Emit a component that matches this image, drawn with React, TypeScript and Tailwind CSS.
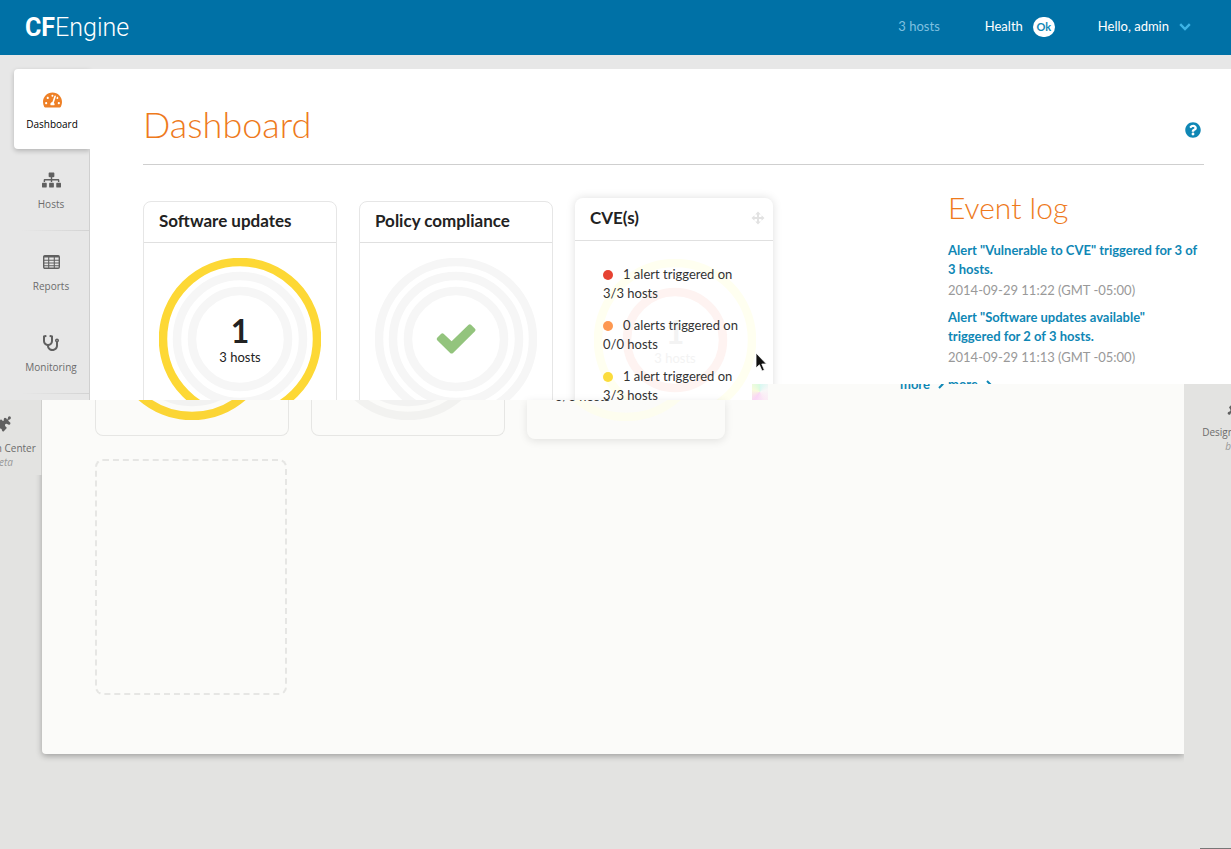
import React from "react";
import { FaQuestionCircle, FaSitemap, FaStethoscope, FaTachometerAlt } from "react-icons/fa";

const GREY = "#f6f6f6";

function Rings({ colors, className }: { colors: string[]; className?: string }) {
  const radii = [77, 63, 48];
  return (
    <svg viewBox="0 0 162 162" className={className} aria-hidden="true">
      {radii.map((r, i) => (
        <circle key={r} cx="81" cy="81" r={r} fill="none" stroke={colors[i]} strokeWidth="8.5" />
      ))}
    </svg>
  );
}

function TableIcon() {
  return (
    <svg viewBox="0 0 17 14" className="h-[14px] w-[17px]" fill="none" stroke="currentColor" aria-hidden="true">
      <rect x="0.7" y="0.7" width="15.6" height="12.6" rx="1.2" strokeWidth="1.4" />
      <path d="M1 1.6H16" strokeWidth="1.8" />
      <path d="M1 5.2H16M1 8H16M1 10.8H16M5.7 1V13M11.3 1V13" strokeWidth="1.1" />
    </svg>
  );
}

function PuzzleIcon() {
  return (
    <svg viewBox="0 0 18 18" className="size-[18px]" fill="currentColor" aria-hidden="true">
      <path d="M3 8.2L7 4.2L8.6 5.8Q9.6 6.2 9.8 5.2Q9.4 3.2 11 2.8Q12.6 2.8 13 4.4Q13.6 4.6 13.8 3.4Q13.8 1.2 15.6 1.2Q17.2 1.6 16.8 3.4Q16.2 4.8 14.6 4.8Q14 5.6 14.8 6.2L16.4 7.8Q16.6 9.2 15.4 9.8Q14.2 10 13.2 9Q11.6 8.4 11 9.8Q10.8 11.2 12.2 12L12.8 13L9.6 16.4Q8.4 16.8 8 15.4Q8 13.6 6.4 13.4Q4.8 13.6 4.4 15.2Q3 16.4 1.8 15Q1.2 13.4 3 12.8Q4.8 12.4 4.4 10.8Z" />
    </svg>
  );
}

function MoveIcon() {
  return (
    <svg viewBox="0 0 14 14" className="size-[14px] text-[#e2e2e2]" fill="currentColor" aria-hidden="true">
      <path d="M7 .5L9.8 3.5H8V6H10.5V4.2L13.5 7L10.5 9.8V8H8V10.5H9.8L7 13.5L4.2 10.5H6V8H3.5V9.8L.5 7L3.5 4.2V6H6V3.5H4.2Z" />
    </svg>
  );
}

function NavItem({ label, icon, active, note }: { label: string; icon: React.ReactNode; active?: boolean; note?: string }) {
  return (
    <a
      href="#"
      className={
        active
          ? "flex h-20 w-[76px] flex-col items-center rounded-l bg-white pt-[21px] font-['Open_Sans',sans-serif] text-[10px] leading-4 text-black shadow-[0_2px_5px_rgba(0,0,0,0.22)]"
          : "flex h-[81px] w-[74px] flex-col items-center pt-[21px] font-['Open_Sans',sans-serif] text-[10px] leading-4 text-[#6c6c6c]"
      }
    >
      <span className={active ? "flex h-5 items-center text-[#ee8026]" : "flex h-5 items-center text-[#606060]"}>{icon}</span>
      <span className="mt-[6px] whitespace-nowrap">{label}</span>
      {note && <i className="leading-3 text-[#999]">{note}</i>}
    </a>
  );
}

function Separator() {
  return <div className="ml-2 h-px w-[67px] bg-linear-to-r from-transparent to-[#d3d3d3]" />;
}

function Card({ title, children }: { title: string; children: React.ReactNode }) {
  return (
    <section className="mt-1 h-60 w-[194px] shrink-0 rounded-lg border border-[#e6e6e6] bg-white">
      <h2 className="h-[41px] border-b border-[#e0e0e0] pl-[15px] text-[17px] leading-[38px] font-bold text-[#222]">{title}</h2>
      <div className="relative mx-auto mt-[15px] h-[162px] w-[162px]">{children}</div>
    </section>
  );
}

function Alert({ dot, count }: { dot: string; count: [string, string] }) {
  return (
    <li>
      <span className={"mr-[10px] inline-block size-[10px] rounded-full align-[-1px] " + dot} />
      {count[0]} triggered on
      <br />
      {count[1]} hosts
    </li>
  );
}

function EventItem({ text, time }: { text: string; time: string }) {
  return (
    <li>
      <a href="#" className="block font-bold text-[#0f87b5]">
        {text}
      </a>
      <time className="block pt-[2px] text-[#999]">{time}</time>
    </li>
  );
}

function More() {
  return (
    <a href="#" className="flex items-center gap-2 text-[13px] leading-4 font-bold text-[#0f87b5]">
      more
      <svg viewBox="0 0 6 9" className="mt-px h-[9px] w-[6px]" fill="none" stroke="currentColor" strokeWidth="2" aria-hidden="true">
        <path d="M1 1L4.5 4.5L1 8" />
      </svg>
    </a>
  );
}

export default function App() {
  return (
    <div className="flex min-h-screen flex-col bg-[#e3e3e1] font-['Lato',sans-serif] text-[13px] text-[#333]">
      <header className="flex h-[55px] items-center bg-[#0071a6] pr-10 pb-px pl-[25px] text-white">
        <a href="#" className="pt-[2px] font-['Roboto',sans-serif] text-[25px] leading-8 font-light">
          <b className="font-bold">CF</b>Engine
        </a>
        <div className="ml-auto flex items-center">
          <span className="mr-[45px] text-[#7fc0e0]">3 hosts</span>
          <span className="mr-[10px]">Health</span>
          <span className="mr-[43px] flex h-5 w-[22px] items-center justify-center rounded-full bg-white text-[11px] font-bold text-[#0f87b5]">Ok</span>
          <button className="flex items-center gap-[10px]">
            Hello, admin
            <svg viewBox="0 0 12 8" className="h-2 w-3" fill="none" stroke="#3db4e6" strokeWidth="2.4" aria-hidden="true">
              <path d="M1.2 1.2L6 6L10.8 1.2" />
            </svg>
          </button>
        </div>
      </header>

      <div className="relative h-[345px] overflow-hidden bg-[#e7e7e7] pt-[14px] pl-[14px]">
        <div className="flex">
          <nav className="relative flex w-[76px] shrink-0 flex-col">
            <NavItem active label="Dashboard" icon={<FaTachometerAlt className="h-[18px] w-[19px]" />} />
            <div className="border-r border-[#d0d0d0]">
              <NavItem label="Hosts" icon={<FaSitemap className="h-4 w-[19px]" />} />
              <Separator />
              <NavItem label="Reports" icon={<TableIcon />} />
              <NavItem label="Monitoring" icon={<FaStethoscope className="size-4" />} />
              <Separator />
              <div className="h-10" />
            </div>
          </nav>

          <main className="relative h-[345px] min-w-0 flex-1 bg-white pt-[35px] pr-[27px] pl-[53px]">
            <div className="flex items-center justify-between border-b border-[#cfcfcf] pb-5">
              <h1 className="text-[36px] leading-10 font-light text-[#ee7a1c]">Dashboard</h1>
              <button aria-label="Help" className="mt-3 mr-[3px]">
                <FaQuestionCircle className="size-4 text-[#0f87b5]" />
              </button>
            </div>

            <div className="flex">
              <div className="flex flex-1 items-start gap-[22px] pt-8">
                <Card title="Software updates">
                  <Rings colors={["#fdd835", GREY, GREY]} className="size-full" />
                  <div className="absolute inset-0 flex flex-col items-center pt-[57px] text-[#222]">
                    <b className="text-[32px] leading-8">1</b>
                    <span className="mt-[2px] leading-4">3 hosts</span>
                  </div>
                </Card>
                <Card title="Policy compliance">
                  <Rings colors={[GREY, GREY, GREY]} className="size-full" />
                  <svg viewBox="0 0 40 30" className="absolute inset-0 m-auto h-[30px] w-10" aria-label="Compliant">
                    <path
                      d="M1.2 13.7L5.2 9.7Q6.4 8.7 7.6 9.7L15.6 17.3L32.6 .8Q33.8 -.2 35 .8L39 4.8Q40 6 39 7.2L16.8 29.2Q15.6 30 14.4 29.2L1.2 16.2Q.2 15 1.2 13.7Z"
                      fill="#93c47d"
                    />
                  </svg>
                </Card>
                <section className="relative mt-px h-60 w-[198px] shrink-0 rounded-lg bg-white shadow-[0_0_10px_rgba(0,0,0,0.13)]">
                  <div className="flex h-[43px] items-center justify-between border-b border-[#e0e0e0] pr-2 pb-[2px] pl-[15px]">
                    <h2 className="text-[17px] font-bold text-[#222]">CVE(s)</h2>
                    <MoveIcon />
                  </div>
                  <div className="absolute top-[61px] left-[19px] size-[162px]">
                    <Rings colors={["#fffff0", "#ffffff", "#fef3f1"]} className="size-full" />
                    <div className="absolute inset-0 flex flex-col items-center pt-[57px] text-[#f3f3f3]">
                      <b className="text-[32px] leading-8">1</b>
                      <span className="mt-[2px] leading-4">3 hosts</span>
                    </div>
                  </div>
                  <ul className="relative flex flex-col gap-[13px] pt-6 pl-7 leading-[19px] whitespace-nowrap">
                    <Alert dot="bg-[#e64232]" count={["1 alert", "3/3"]} />
                    <Alert dot="bg-[#fd9850]" count={["0 alerts", "0/0"]} />
                    <Alert dot="bg-[#fbdc3c]" count={["1 alert", "3/3"]} />
                  </ul>
                </section>
              </div>

              <aside className="w-64 shrink-0 pt-[26px]">
                <h2 className="text-[30px] leading-8 font-light text-[#ee7a1c]">Event log</h2>
                <ul className="flex flex-col gap-2 pt-[18px] pr-1 leading-[19px]">
                  <EventItem text={'Alert "Vulnerable to CVE" triggered for 3 of 3 hosts.'} time="2014-09-29 11:22 (GMT -05:00)" />
                  <EventItem text={'Alert "Software updates available" triggered for 2 of 3 hosts.'} time="2014-09-29 11:13 (GMT -05:00)" />
                </ul>
                <div className="pt-[9px]">
                  <More />
                </div>
              </aside>
            </div>
          </main>
        </div>

        <svg viewBox="0 0 12 20" className="absolute top-[297px] left-[755px] h-5 w-3" aria-hidden="true">
          <path d="M1 1V16L4.4 12.8L7 19L9.4 18L6.8 12H11.5Z" fill="#111" stroke="#fff" strokeWidth="0.8" />
        </svg>

        <div className="absolute right-0 bottom-0 left-[752px] flex h-4 overflow-hidden bg-[#fbfbf9]">
          <div className="size-4 bg-[conic-gradient(#c8f7ee,#f7f5f6,#fbe6f4,#f9c6f4,#f7fbd0,#c9fbd6)] opacity-70" />
          <div className="-mt-2 flex-1 pl-[132px]">
            <More />
          </div>
          <div className="w-[47px] bg-[#e3e3e1]" />
        </div>
      </div>

      <div className="flex flex-1">
        <div className="relative z-10 h-[75px] w-[42px] shrink-0 overflow-hidden border-r border-[#cfcfcd] bg-[#e3e3e1]">
          <div className="-mt-[7px] -ml-[34px]">
            <NavItem label="Design Center" note="beta" icon={<PuzzleIcon />} />
          </div>
        </div>

        <div className="min-w-0 flex-1">
          <div className="h-[354px] rounded-bl bg-[#fbfbf9] pl-[53px] shadow-[0_2px_6px_rgba(0,0,0,0.3)]">
            <div className="flex items-start gap-[22px]">
              <div className="h-9 w-[194px] overflow-hidden rounded-b-lg border border-t-0 border-[#e6e6e4]">
                <Rings colors={["#fbd535", "#f2f2f1", "#f2f2f1"]} className="mx-auto -mt-[142px] size-[162px]" />
              </div>
              <div className="h-9 w-[194px] overflow-hidden rounded-b-lg border border-t-0 border-[#e6e6e4]">
                <Rings colors={["#f2f2f0", "#f2f2f1", "#f2f2f1"]} className="mx-auto -mt-[142px] size-[162px]" />
              </div>
              <div className="relative h-[39px] w-[198px] rounded-b-lg bg-[#fbfbf9] shadow-[0_2px_8px_rgba(0,0,0,0.1)]">
                <div className="absolute inset-0 overflow-hidden">
                  <Rings colors={["#fdfdef", "#fbfbf9", "#fbfbf9"]} className="mx-auto -mt-[141px] size-[162px]" />
                  <span className="absolute -top-[13px] left-7 leading-[19px]">3/3 hosts</span>
                </div>
              </div>
            </div>
            <div className="mt-5 h-[236px] w-48 rounded-lg border-2 border-dashed border-[#e6e6e4]" />
          </div>
        </div>

        <div className="relative z-10 flex w-[47px] shrink-0 flex-col overflow-hidden bg-[#e3e3e1]">
          <div className="-mt-[23px] ml-[14px]">
            <NavItem label="Design Center" note="beta" icon={<PuzzleIcon />} />
          </div>
          <div className="mt-auto ml-4 h-px bg-[#777]" />
        </div>
      </div>
    </div>
  );
}
